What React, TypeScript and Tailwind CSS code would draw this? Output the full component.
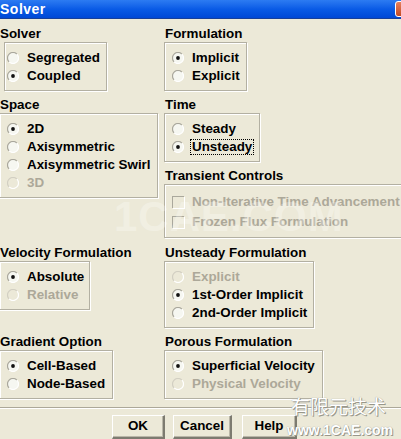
import React from 'react';

const FONT = { fontFamily: '"Liberation Sans", Arial, "Noto Sans CJK SC", sans-serif' };

const Radio: React.FC<{ checked?: boolean; disabled?: boolean }> = ({ checked, disabled }) => (
  <svg width="12" height="12" viewBox="0 0 12 12" className="flex-none">
    <circle cx="6" cy="6" r="5.4" fill={disabled ? '#ece9d8' : '#f6f7f1'} />
    <path d="M9.9 2.1 A5.4 5.4 0 0 0 2.1 9.9" stroke={disabled ? '#d2cfc2' : '#a9a79c'} strokeWidth="1.2" fill="none" />
    <path d="M9.9 2.1 A5.4 5.4 0 0 1 2.1 9.9" stroke="#ffffff" strokeWidth="1.2" fill="none" />
    {checked && <circle cx="6" cy="6" r="1.9" fill={disabled ? '#aca899' : '#111111'} />}
  </svg>
);

const Check: React.FC = () => (
  <span className="flex-none w-[12px] h-[12px] border-t border-l border-[#aaa89c] shadow-[1px_1px_0_#ffffff]" />
);

const Option: React.FC<{ label: React.ReactNode; checked?: boolean; disabled?: boolean }> = ({ label, checked, disabled }) => (
  <div className={`flex items-center h-[18px] gap-[8px] whitespace-nowrap ${disabled ? 'text-[#aca899]' : 'text-black'}`}>
    <Radio checked={checked} disabled={disabled} />
    {label}
  </div>
);

const CheckOption: React.FC<{ label: string }> = ({ label }) => (
  <div className="flex items-center h-[20px] gap-[8px] whitespace-nowrap text-[#aca899]">
    <Check />
    {label}
  </div>
);

const Group: React.FC<{ label: string; boxClass: string; children: React.ReactNode; labelClass?: string }> = ({
  label,
  boxClass,
  children,
  labelClass = 'pl-[1px]',
}) => (
  <div>
    <div className={`h-[16px] leading-[16px] whitespace-nowrap ${labelClass}`}>{label}</div>
    <div className={`border border-[#b3b0a2] shadow-[inset_1px_1px_0_#ffffff,1px_1px_0_#ffffff] pt-[6px] pb-[5px] ${boxClass}`}>
      {children}
    </div>
  </div>
);

const Button: React.FC<{ label: string; className: string }> = ({ label, className }) => (
  <div
    className={`h-[24px] flex items-center justify-center bg-[#ece9d8] border-t border-l border-white border-r-2 border-b-2 border-r-[#7d7b70] border-b-[#7d7b70] shadow-[inset_-1px_-1px_0_#b9b6a8] ${className}`}
  >
    {label}
  </div>
);

export default function App() {
  return (
    <div className="relative w-[401px] h-[439px] overflow-hidden bg-[#ece9d8] text-[13.4px] font-bold text-black" style={FONT}>
      <div className="relative h-[19px] border-b border-[#17409a] bg-gradient-to-b from-[#2c7bf2] via-[#0a5be6] to-[#0048d6] flex items-center">
        <span className="text-white text-[14px] font-bold leading-none tracking-[0.5px]">Solver</span>
        <span className="absolute right-[-12px] top-[1px] w-[18px] h-[16px] rounded-[3px] border border-white bg-gradient-to-b from-[#e8805c] to-[#c24a24]" />
      </div>

      {/* row 1 */}
      <div className="flex mt-[7px]">
        <div className="w-[164px] flex-none">
          <Group label="Solver" labelClass="pl-0" boxClass="ml-[4px] w-[103px] pl-[2px]">
            <Option label="Segregated" />
            <Option label="Coupled" checked />
          </Group>
        </div>
        <Group label="Formulation" boxClass="w-[83px] pl-[7px]">
          <Option label="Implicit" checked />
          <Option label="Explicit" />
        </Group>
      </div>

      {/* row 2 */}
      <div className="flex mt-[6px]">
        <div className="w-[164px] flex-none">
          <Group label="Space" labelClass="pl-0" boxClass="-ml-[1px] w-[159px] pl-[7px]">
            <Option label="2D" checked />
            <Option label="Axisymmetric" />
            <Option label="Axisymmetric Swirl" />
            <Option label="3D" disabled />
          </Group>
        </div>
        <div className="flex flex-col gap-[6px]">
          <Group label="Time" boxClass="w-[96px] pl-[7px]">
            <Option label="Steady" />
            <Option
              checked
              label={<span className="-ml-[2px] px-[1px] border border-dotted border-black leading-[14px]">Unsteady</span>}
            />
          </Group>
          <Group label="Transient Controls" boxClass="w-[250px] pl-[7px] pt-[7px] pb-[5px]">
            <CheckOption label="Non-Iterative Time Advancement" />
            <CheckOption label="Frozen Flux Formulation" />
          </Group>
        </div>
      </div>

      {/* row 3 */}
      <div className="flex mt-[7px]">
        <div className="w-[164px] flex-none">
          <Group label="Velocity Formulation" labelClass="pl-0" boxClass="-ml-[1px] w-[91px] pl-[7px]">
            <Option label="Absolute" checked />
            <Option label="Relative" disabled />
          </Group>
        </div>
        <Group label="Unsteady Formulation" boxClass="w-[150px] pl-[7px]">
          <Option label="Explicit" disabled />
          <Option label="1st-Order Implicit" checked />
          <Option label="2nd-Order Implicit" />
        </Group>
      </div>

      {/* row 4 */}
      <div className="flex mt-[6px]">
        <div className="w-[164px] flex-none">
          <Group label="Gradient Option" labelClass="pl-0" boxClass="-ml-[1px] w-[114px] pl-[7px]">
            <Option label="Cell-Based" checked />
            <Option label="Node-Based" />
          </Group>
        </div>
        <Group label="Porous Formulation" boxClass="w-[159px] pl-[7px]">
          <Option label="Superficial Velocity" checked />
          <Option label="Physical Velocity" disabled />
        </Group>
      </div>

      <div className="mt-[8px] h-[2px] border-t border-[#aca899] border-b border-b-white" />

      <div className="flex mt-[6px] pl-[112px]">
        <Button label="OK" className="w-[53px]" />
        <Button label="Cancel" className="w-[59px] ml-[8px]" />
        <Button label="Help" className="w-[55px] ml-[10px]" />
      </div>

      {/* watermarks */}
      <div className="absolute left-[114px] top-[196px] text-[42px] font-bold leading-none text-white/30 tracking-[1px] pointer-events-none">
        1CAE.COM
      </div>
      <div className="absolute left-[291px] top-[398px] text-[19px] font-normal leading-none text-white [text-shadow:0_0_1px_#8a8a80,1px_1px_0_#9a988c] pointer-events-none">
        有限元技术
      </div>
      <div className="absolute left-[287px] top-[423px] text-[14px] font-bold leading-none text-white [text-shadow:0_0_1px_#8a8a80,1px_1px_0_#9a988c] pointer-events-none">
        www.1CAE.com
      </div>
    </div>
  );
}
